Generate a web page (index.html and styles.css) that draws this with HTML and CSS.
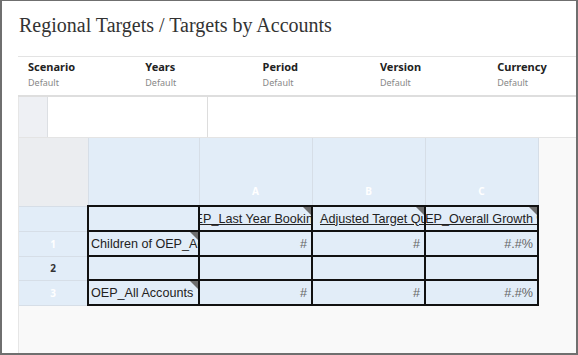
FILE: index.html
```html
<!DOCTYPE html>
<html>
<head>
<meta charset="utf-8">
<title>Regional Targets / Targets by Accounts</title>
<link rel="stylesheet" href="styles.css">
</head>
<body>
<div class="frame">
    <h1 class="title">Regional Targets / Targets by Accounts</h1>

    <div class="pov">
        <div class="pov-item"><div class="pov-name">Scenario</div><div class="pov-value">Default</div></div>
        <div class="pov-item"><div class="pov-name">Years</div><div class="pov-value">Default</div></div>
        <div class="pov-item"><div class="pov-name">Period</div><div class="pov-value">Default</div></div>
        <div class="pov-item"><div class="pov-name">Version</div><div class="pov-value">Default</div></div>
        <div class="pov-item"><div class="pov-name">Currency</div><div class="pov-value">Default</div></div>
    </div>

    <div class="sheet">
        <div class="toolbar">
            <div class="tool-stub"></div>
            <div class="tool-box"></div>
            <div class="tool-rest"></div>
        </div>

        <table class="grid">
            <colgroup>
                <col class="c-rowhead">
                <col class="c-member">
                <col class="c-data">
                <col class="c-data">
                <col class="c-data">
            </colgroup>
            <tr class="col-heads">
                <th class="corner"></th>
                <th class="col-head"></th>
                <th class="col-head">A</th>
                <th class="col-head">B</th>
                <th class="col-head">C</th>
            </tr>
            <tr class="r-head">
                <th class="row-head"></th>
                <td class="cell"></td>
                <td class="cell"><div class="clip"><span>OEP_Last Year Bookings</span></div><i class="flag"></i></td>
                <td class="cell"><div class="clip left"><span>Adjusted Target Quota</span></div><i class="flag"></i></td>
                <td class="cell"><div class="clip"><span>OEP_Overall Growth %</span></div><i class="flag"></i></td>
            </tr>
            <tr class="r-data">
                <th class="row-head">1</th>
                <td class="cell member"><div class="clip left">Children of OEP_Accounts</div><i class="flag"></i></td>
                <td class="cell num">#</td>
                <td class="cell num">#</td>
                <td class="cell num">#.#%</td>
            </tr>
            <tr class="r-empty">
                <th class="row-head dark">2</th>
                <td class="cell"></td>
                <td class="cell"></td>
                <td class="cell"></td>
                <td class="cell"></td>
            </tr>
            <tr class="r-data">
                <th class="row-head">3</th>
                <td class="cell member"><div class="clip left">OEP_All Accounts</div><i class="flag"></i></td>
                <td class="cell num">#</td>
                <td class="cell num">#</td>
                <td class="cell num">#.#%</td>
            </tr>
        </table>
    </div>
</div>
</body>
</html>
```

FILE: styles.css
```css
html, body {
    margin: 0;
    padding: 0;
    background: #fff;
}

* {
    box-sizing: border-box;
}

.frame {
    width: 578px;
    height: 355px;
    border: 2px solid #6f6f6f;
    border-top-width: 1px;
    padding-left: 16px;
    display: flex;
    flex-direction: column;
    overflow: hidden;
}

.title {
    margin: 12px 0 19px 1px;
    font-family: "Liberation Serif", serif;
    font-size: 20px;
    line-height: 24px;
    font-weight: normal;
    color: #333;
}

/* point of view bar */
.pov {
    display: flex;
    border-top: 1px solid #e3e3e3;
    border-bottom: 2px solid #dedede;
    padding: 3px 0 6px 10px;
    font-family: "Noto Sans", sans-serif;
}

.pov-item {
    flex: none;
    width: 117.3px;
}

.pov-name {
    font-size: 11px;
    line-height: 14px;
    font-weight: bold;
    color: #222;
}

.pov-value {
    margin-top: 3px;
    font-size: 9px;
    line-height: 12px;
    color: #888;
}

/* spreadsheet */
.sheet {
    flex: 1;
    background: #f9f9f9;
    border-left: 1px solid #e6e6e6;
}

.toolbar {
    display: flex;
    height: 41px;
    background: #fff;
    border-bottom: 1px solid #e4e4e4;
}

.tool-stub {
    width: 29px;
    background: #eef0f4;
    border-right: 1px solid #dcdfe3;
}

.tool-box {
    width: 160px;
    border-right: 1px solid #dddddd;
}

.tool-rest {
    flex: 1;
}

.grid {
    width: 519px;
    border-collapse: collapse;
    table-layout: fixed;
    font-family: "Liberation Sans", Arial, sans-serif;
}

.c-rowhead { width: 69px; }
.c-member { width: 111px; }
.c-data { width: 113px; }

.col-heads th {
    height: 68px;
    padding: 0 0 8px;
    vertical-align: bottom;
    border: 1px solid #d6dee7;
    border-top: none;
    background: #e2edf8;
    color: #fff;
    font-family: "Noto Sans", sans-serif;
    font-size: 10px;
    line-height: 12px;
    font-weight: bold;
}

.col-heads th.corner {
    background: #ebedf0;
    border-left: none;
}

.row-head {
    padding: 0;
    background: #e2edf8;
    border: 1px solid #d6dee7;
    border-left: none;
    color: #fff;
    font-family: "Noto Sans", sans-serif;
    font-size: 10px;
    font-weight: bold;
}

.row-head.dark {
    color: #333;
}

.r-head td, .r-head th { height: 25px; }
.r-data td, .r-data th { height: 25px; }
.r-empty td, .r-empty th { height: 24px; }

.cell {
    position: relative;
    padding: 0 4px;
    background: #e2edf8;
    border: 2px solid #111;
    font-size: 12.6px;
    line-height: 16px;
    color: #222;
    white-space: nowrap;
    overflow: hidden;
}

.cell.num {
    text-align: right;
    color: #666;
}

.clip {
    display: flex;
    justify-content: center;
    overflow: hidden;
    margin: 0 -4px;
}

.clip span {
    text-decoration: underline;
}

.clip.left {
    justify-content: flex-start;
    padding-left: 7px;
}

.member .clip.left {
    padding-left: 2px;
}

.flag {
    position: absolute;
    top: 0;
    right: 0;
    width: 0;
    height: 0;
    border-top: 8px solid #6e6e6e;
    border-left: 8px solid transparent;
}
```
